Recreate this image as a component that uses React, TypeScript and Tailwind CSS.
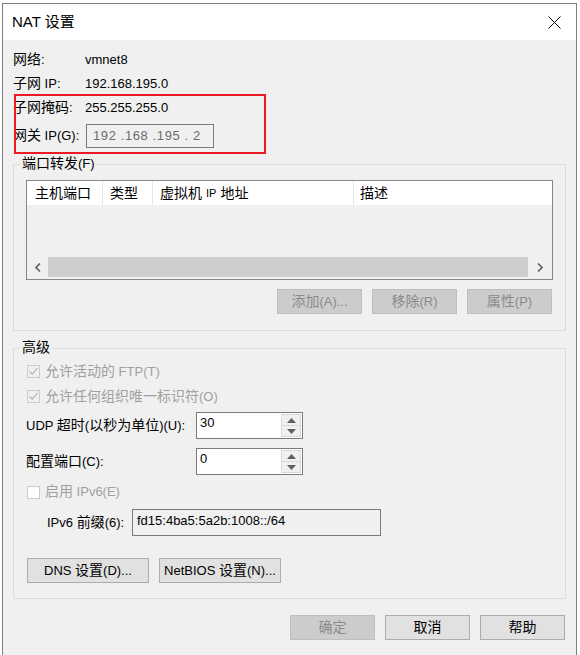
import React from 'react'

// CJK glyphs sit a bit larger than the Latin text in the original dialog
const T = ({ children }: { children: string }) => (
  <>
    {children.split(/([\u3000-\u9fff]+)/).map((part, i) =>
      i % 2 ? (
        <span key={i} className="text-[14px] leading-none">
          {part}
        </span>
      ) : (
        part
      )
    )}
  </>
)

const Check = ({ checked }: { checked?: boolean }) => (
  <div className={`flex h-[13px] w-[13px] items-center justify-center border ${checked ? 'border-[#cccccc] bg-[#f0f0f0]' : 'border-[#cccccc] bg-white'}`}>
    {checked && (
      <svg width="11" height="11" viewBox="0 0 11 11">
        <path d="M1.5 5.5 L4.2 8.2 L9.5 2.2" fill="none" stroke="#b4b4b4" strokeWidth="1.2" />
      </svg>
    )}
  </div>
)

const WinButton = ({ label, disabled, className = '' }: { label: string; disabled?: boolean; className?: string }) => (
  <div
    className={`flex h-[25px] items-center justify-center border text-[13px] leading-[16px] ${
      disabled ? 'border-[#bfbfbf] bg-[#cccccc] text-[#8a8a8a]' : 'border-[#adadad] bg-[#e1e1e1] text-black'
    } ${className}`}
  >
    <span>
      <T>{label}</T>
    </span>
  </div>
)

const Spinner = ({ value }: { value: string }) => (
  <div className="flex h-[27px] w-[107px] border border-[#7a7a7a] bg-white">
    <div className="flex-1 pl-[3px] pt-[2px] text-[13px] leading-[16px]">{value}</div>
    <div className="my-[1px] mr-[1px] flex w-[20px] flex-col bg-[#f0f0f0]">
      <div className="flex flex-1 items-center justify-center border border-[#d9d9d9]">
        <svg width="9" height="5" viewBox="0 0 9 5">
          <path d="M0 5 L4.5 0 L9 5 Z" fill="#606060" />
        </svg>
      </div>
      <div className="flex flex-1 items-center justify-center border border-t-0 border-[#d9d9d9]">
        <svg width="9" height="5" viewBox="0 0 9 5">
          <path d="M0 0 L9 0 L4.5 5 Z" fill="#606060" />
        </svg>
      </div>
    </div>
  </div>
)

const InfoRow = ({ label, value }: { label: string; value: string }) => (
  <div className="flex h-[24px] items-center">
    <span className="w-[72px]">
      <T>{label}</T>
    </span>
    <span>{value}</span>
  </div>
)

export default function App() {
  return (
    <div className="relative h-[655px] w-[580px] overflow-hidden bg-white pl-[2px] pr-[3px] pt-[3px] font-['Liberation_Sans','Noto_Sans_CJK_SC',sans-serif] text-[13px] leading-[18px] text-black">
      <div className="flex h-full flex-col border-l border-r border-t border-[#7d7d7d]">
        {/* title bar */}
        <div className="flex h-[36px] items-center justify-between bg-white pl-[9px] pr-[15px]">
          <span className="text-[15px]">NAT 设置</span>
          <svg width="13" height="13" viewBox="0 0 13 13">
            <path d="M0.5 0.5 L12.5 12.5 M12.5 0.5 L0.5 12.5" stroke="#000" strokeWidth="1" />
          </svg>
        </div>

        <div className="flex-1 bg-[#f0f0f0] pt-[8px]">
          <div className="pl-[10px]">
            <InfoRow label="网络:" value="vmnet8" />
            <InfoRow label="子网 IP:" value="192.168.195.0" />
            <InfoRow label="子网掩码:" value="255.255.255.0" />
            <div className="mt-[4px] flex h-[24px] items-center">
              <span className="w-[73px]">
                <T>网关 IP(G):</T>
              </span>
              <div className="flex h-[24px] w-[128px] items-center whitespace-pre border border-[#7a7a7a] bg-[#f0f0f0] pl-[6px] tracking-[0.6px] text-[#6d6d6d]">
                192 .168 .195 . 2
              </div>
            </div>
          </div>

          {/* port forwarding */}
          <fieldset className="mx-[10px] mt-[7px] border border-[#dcdcdc] px-[12px] pb-[16px]">
            <legend className="ml-[-6px] px-[2px] leading-[18px]">
              <T>端口转发(F)</T>
            </legend>
            <div className="mt-[7px] flex h-[100px] flex-col border border-[#828790]">
              <div className="flex h-[24px] bg-white">
                <div className="flex w-[76px] items-center border-r border-[#e5e5e5] pl-[8px]">
                  <T>主机端口</T>
                </div>
                <div className="flex w-[50px] items-center border-r border-[#e5e5e5] pl-[7px]">
                  <T>类型</T>
                </div>
                <div className="flex w-[201px] items-center border-r border-[#e5e5e5] pl-[7px]">
                  <T>虚拟机</T>
                  <span className="mx-[4px] text-[11px]">IP</span>
                  <T>地址</T>
                </div>
                <div className="flex flex-1 items-center pl-[6px]">
                  <T>描述</T>
                </div>
              </div>
              <div className="flex-1" />
              <div className="mb-[2px] flex h-[20px]">
                <div className="flex w-[21px] items-center justify-center bg-[#f0f0f0]">
                  <svg width="6" height="9" viewBox="0 0 6 9">
                    <path d="M5 0.5 L1 4.5 L5 8.5" fill="none" stroke="#606060" strokeWidth="1.6" />
                  </svg>
                </div>
                <div className="flex-1 bg-[#cdcdcd]" />
                <div className="flex w-[24px] items-center justify-center bg-[#f0f0f0]">
                  <svg width="6" height="9" viewBox="0 0 6 9">
                    <path d="M1 0.5 L5 4.5 L1 8.5" fill="none" stroke="#606060" strokeWidth="1.6" />
                  </svg>
                </div>
              </div>
            </div>
            <div className="mr-[1px] mt-[9px] flex justify-end gap-[10px]">
              <WinButton disabled className="w-[85px]" label="添加(A)..." />
              <WinButton disabled className="w-[85px]" label="移除(R)" />
              <WinButton disabled className="w-[85px]" label="属性(P)" />
            </div>
          </fieldset>

          {/* advanced */}
          <fieldset className="mx-[10px] mt-[8px] border border-[#dcdcdc] px-[12px] pb-[15px]">
            <legend className="ml-[-6px] px-[2px] leading-[18px]">
              <T>高级</T>
            </legend>
            <div className="mt-[2px] flex h-[25px] items-center gap-[5px] pl-[1px] text-[#a0a0a0]">
              <Check checked />
              <span>
                <T>允许活动的 FTP(T)</T>
              </span>
            </div>
            <div className="flex h-[25px] items-center gap-[5px] pl-[1px] text-[#a0a0a0]">
              <Check checked />
              <span>
                <T>允许任何组织唯一标识符(O)</T>
              </span>
            </div>
            <div className="mt-[3px] flex items-center">
              <span className="w-[170px]">
                <T>UDP 超时(以秒为单位)(U):</T>
              </span>
              <Spinner value="30" />
            </div>
            <div className="mt-[9px] flex items-center">
              <span className="w-[170px]">
                <T>配置端口(C):</T>
              </span>
              <Spinner value="0" />
            </div>
            <div className="mt-[5px] flex h-[24px] items-center gap-[5px] pl-[1px] text-[#a0a0a0]">
              <Check />
              <span>
                <T>启用 IPv6(E)</T>
              </span>
            </div>
            <div className="mt-[5px] flex items-center pl-[21px]">
              <span className="w-[85px]">
                <T>IPv6 前缀(6):</T>
              </span>
              <div className="h-[27px] w-[249px] border border-[#7a7a7a] bg-[#f0f0f0] pl-[4px] pt-[3px] leading-[16px]">
                fd15:4ba5:5a2b:1008::/64
              </div>
            </div>
            <div className="mt-[22px] flex gap-[10px] pl-[1px]">
              <WinButton className="w-[122px]" label="DNS 设置(D)..." />
              <WinButton className="w-[122px]" label="NetBIOS 设置(N)..." />
            </div>
          </fieldset>

          <div className="mt-[16px] flex justify-end gap-[10px] pr-[11px]">
            <WinButton disabled className="w-[85px]" label="确定" />
            <WinButton className="w-[85px]" label="取消" />
            <WinButton className="w-[85px]" label="帮助" />
          </div>
        </div>
      </div>

      {/* red annotation box */}
      <div className="absolute left-[14px] top-[94px] h-[60px] w-[252px] border-2 border-[#ed1c24]" />
    </div>
  )
}
